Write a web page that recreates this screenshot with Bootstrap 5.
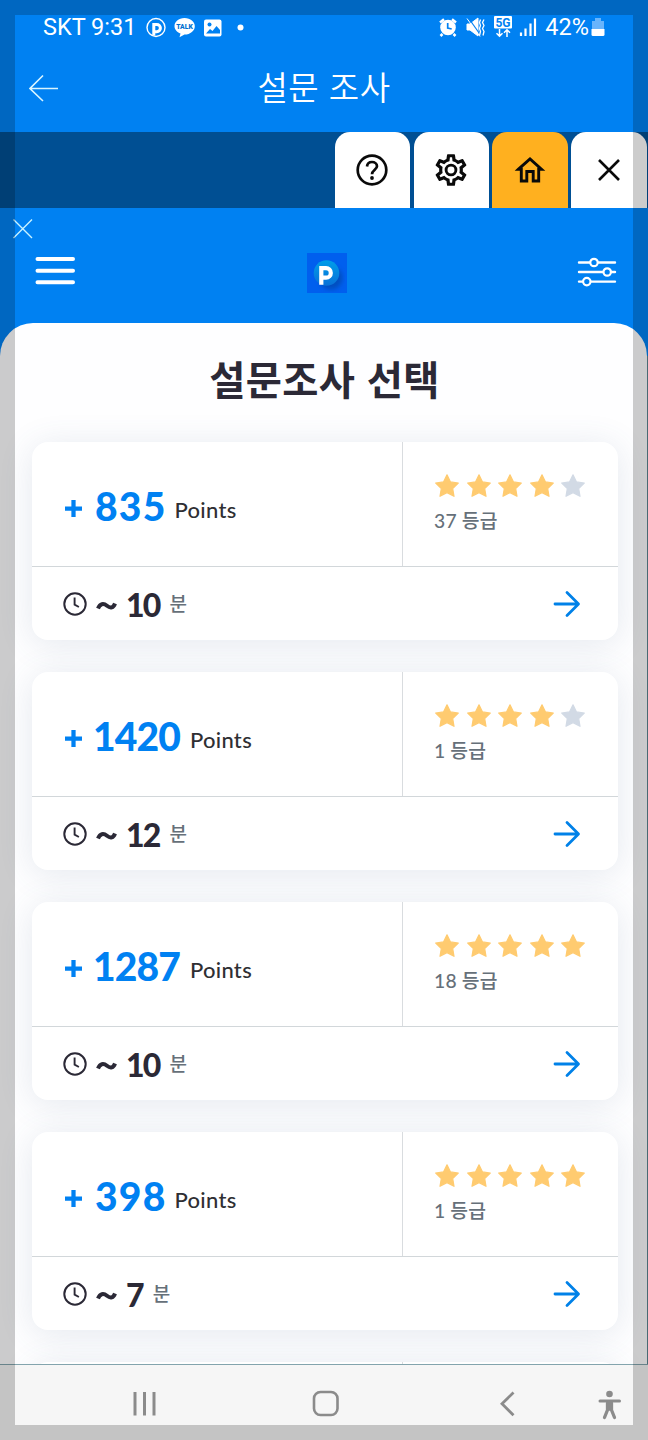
<!DOCTYPE html>
<html lang="ko">
<head>
<meta charset="utf-8">
<meta name="viewport" content="width=device-width, initial-scale=1">
<title>설문 조사</title>
<link href="https://cdn.jsdelivr.net/npm/bootstrap@5.3.0/dist/css/bootstrap.min.css" rel="stylesheet">
<style>
:root{--brand:#0081f2;--ink:#2b2936;--muted-ink:#667079}
body{font-family:Lato,"Noto Sans CJK KR",sans-serif;background:#fff;color:var(--ink)}
svg{display:block;flex:none}
.phone{width:648px;height:1440px;background:var(--brand)}
.phone::after{content:"";position:absolute;inset:0;border:15px solid rgba(0,0,0,.2);pointer-events:none}
.status{height:54px;font:400 23.5px/54px Roboto,"Noto Sans",sans-serif;padding:0 43px 0 43px}
.signals{margin-right:5px}
.battery{margin-left:2px}
.titlebar{height:78px;padding:0 29px 11px}
.titlebar h1{font:350 33px/1 "Noto Sans CJK KR",sans-serif;letter-spacing:.5px;margin:0;padding-bottom:2px}
.side{width:30px}
.tabs{height:76px;background:#004f93;gap:3.3px;padding-right:1.4px}
.tabitem{width:75.5px;height:76px;background:#fff;border-radius:15px 15px 0 0;color:#0a0a0a}
.tabitem.active{background:#ffb01f}
.apphead{height:115px;padding:45px 31px 0 35px}
.dismiss{left:13px;top:11px}
.sheet{height:1041px;background:#fefeff;border-radius:33px 33px 0 0;padding:0 30px 0 32px;margin-right:1px}
.edge{background:linear-gradient(90deg,transparent 647px,#5c8590 647px) no-repeat 0 33px}
.sheet h2{font:700 39.300px/46px "Noto Sans CJK KR",sans-serif;height:119px;padding-top:32px;margin:0;letter-spacing:.4px;flex:none}
.survey{width:586px;height:198px;border:0;border-radius:16px;margin-bottom:32px;box-shadow:0 4px 34px rgba(70,100,135,.14)}
.upper{height:125px;border-bottom:1px solid #d2d7da}
.reward{width:371px;padding:3px 0 0 31px;border-right:1px solid #d9dcdf;color:var(--brand)}
.plus{width:32px;padding:5px 0 0 2px}
.amount{font-size:39px;line-height:50px;font-weight:900;letter-spacing:1.2px;margin-right:8px}
.amount.four{letter-spacing:-.9px;margin:0 10px 0 -2px}
.long{letter-spacing:-.9px}
.unit{font-size:22px;font-weight:500;color:#2f2f33;letter-spacing:.3px;line-height:30px;padding-top:8px;align-self:center}
.rating{padding:31px 0 0 31px}
.stars{gap:5.5px}
.votes{font-size:19.3px;line-height:24px;font-weight:500;color:var(--muted-ink);margin-top:10px;letter-spacing:.3px;word-spacing:-.5px}
.lower{height:73px;padding:0 37px 0 31px}
.minutes{font-size:32px;line-height:40px;font-weight:900;margin-left:9px;padding-top:3px;letter-spacing:-1.8px}
.minutes .tilde{width:30px;margin-top:2px}
.minutes small{font:500 19px/26px "Noto Sans CJK KR",sans-serif;color:var(--muted-ink);margin:-4px 0 0 10px;letter-spacing:0}
.sysnav{height:76px;background:#f6f6f6;border-top:1px solid #83a4ad}
.sysnav svg{width:100%;height:75px}
</style>
</head>
<body>
<svg width="0" height="0" class="position-absolute">
<defs>
<symbol id="star" viewBox="0 0 26 26"><path d="M13 1.800l3.500 7.100 7.800 1.100-5.600 5.500 1.300 7.800-7-3.700-7 3.700 1.300-7.800L1.700 10l7.800-1.100z" fill="currentColor" stroke="currentColor" stroke-width="1.200" stroke-linejoin="round"/></symbol>
<symbol id="clock" viewBox="0 0 24 24"><circle cx="12" cy="12" r="10.700" fill="none" stroke="#2b2936" stroke-width="2"/><path d="M11.600 5.500v7.200l4.300 2.300" fill="none" stroke="#2b2936" stroke-width="1.900"/></symbol>
<symbol id="go" viewBox="0 0 28 28"><path d="M2 14h23M14 2.500L25.500 14 14 25.500" fill="none" stroke="#0081e8" stroke-width="2.800" stroke-linecap="round" stroke-linejoin="round"/></symbol>
<symbol id="plus" viewBox="0 0 18 18"><path d="M0 9h18M9 0v18" stroke="#0081f2" stroke-width="4.500"/></symbol>
</defs>
</svg>
<main class="phone position-relative overflow-hidden d-flex flex-column">
  <div class="status d-flex align-items-center justify-content-between text-white">
    <div class="d-flex align-items-center">
      <span>SKT 9:31</span>
      <svg class="ms-2" width="104" height="26" viewBox="0 0 104 26">
        <circle cx="12" cy="13.500" r="9" fill="none" stroke="#fff" stroke-width="1.400"/><path d="M9.800 21.500V10.500h3a3.600 3.600 0 0 1 0 7.200h-3" fill="none" stroke="#fff" stroke-width="3"/>
        <path d="M40.500 4c6 0 10.300 3.700 10.300 8.200S46.500 20.500 40.500 20.500l-5 2.700 1-3.700c-3.600-1.500-6-4.200-6-7.300C30.500 7.700 34.500 4 40.500 4z" fill="#fff"/><text x="40.500" y="15" text-anchor="middle" font-family="Roboto" font-weight="900" font-size="6.800" fill="#0070d0">TALK</text>
        <rect x="60" y="5.500" width="17.500" height="17" rx="2" fill="#fff"/><circle cx="65.500" cy="10.500" r="2" fill="#0081f2"/><path d="M62 19.500l4-4.500 2.500 2 4-5 3.500 4v3.500z" fill="#0081f2"/>
        <circle cx="96.500" cy="13.500" r="3" fill="#fff"/>
      </svg>
    </div>
    <div class="d-flex align-items-center">
      <svg class="signals" width="106" height="28" viewBox="0 0 106 28">
        <circle cx="14" cy="14.500" r="7.800" fill="#fff"/><path d="M6 9.500l4-3.200M22 9.500l-4-3.200M8.500 21l-2 2M19.500 21l2 2" stroke="#fff" stroke-width="2.500"/><path d="M13.700 10v5l4 1" fill="none" stroke="#0081f2" stroke-width="1.700"/>
        <path d="M33 11h3l8-6v18l-8-6h-3zM33 5.500l13 18" fill="#fff" stroke="#fff" stroke-width="1"/><path d="M34.500 5l12 17" stroke="#0081f2" stroke-width="1.200"/><path d="M46.500 6.500l-1 3 1 3-1 3 1 3-1 4M50 6.500l-1.500 3 1.500 3-1.500 3 1.500 3-1 4" fill="none" stroke="#fff" stroke-width="1.300"/>
        <rect x="60" y="3" width="18" height="12.500" rx="1" fill="#fff"/><text x="69" y="13.500" text-anchor="middle" font-family="Roboto" font-size="12" font-weight="700" fill="#0081f2">5G</text><path d="M65.500 16v7m-3-2.700l3 3 3-3M73 24v-7m-3 2.700l3-3 3 3" fill="none" stroke="#fff" stroke-width="1.500"/>
        <path d="M87 19.500V23M91.500 15.500V23M96.500 10.500V23M101 5.500V23" stroke="#fff" stroke-width="2.200"/>
      </svg>
      <span>42%</span>
      <svg class="battery" width="14" height="20" viewBox="0 0 14 20"><path d="M4 1h6v3h3v9H1V4h3z" fill="#69b4fb"/><path d="M.500 12h13v5.500q0 1.500-1.500 1.500H2q-1.500 0-1.500-1.500z" fill="#fff"/></svg>
    </div>
  </div>
  <header class="titlebar d-flex align-items-center justify-content-between text-white">
    <svg class="side" width="30" height="30" viewBox="0 0 30 30"><path d="M29 15.500H1.500M14 2.500L1 15.500l13 12.500" fill="none" stroke="#d9f5ff" stroke-width="1.600"/></svg>
    <h1>설문 조사</h1>
    <span class="side"></span>
  </header>
  <nav class="tabs d-flex justify-content-end">
    <div class="tabitem d-flex align-items-center justify-content-center"><svg width="34" height="34" viewBox="0 0 34 34"><circle cx="17" cy="17" r="14.300" fill="none" stroke="currentColor" stroke-width="2.700"/><path d="M12 13.500c.3-3 2.300-4.500 5-4.500s5 1.700 5 4.300c0 3.200-5 3.800-5 8" fill="none" stroke="currentColor" stroke-width="2.700"/><circle cx="17" cy="25" r="1.900" fill="currentColor"/></svg></div>
    <div class="tabitem d-flex align-items-center justify-content-center"><svg width="38" height="38" viewBox="0 0 24 24" fill="currentColor"><path d="M19.430 12.980c.04-.32.070-.64.070-.98s-.03-.66-.07-.98l2.110-1.650c.19-.15.240-.42.120-.64l-2-3.460a.5.500 0 0 0-.61-.22l-2.490 1a7.300 7.300 0 0 0-1.690-.98l-.38-2.650A.49.490 0 0 0 14 2h-4a.49.490 0 0 0-.49.420l-.38 2.650c-.61.250-1.170.59-1.690.98l-2.490-1a.5.500 0 0 0-.61.220l-2 3.460a.49.490 0 0 0 .12.640l2.110 1.650a7.930 7.930 0 0 0 0 1.960l-2.110 1.650a.49.490 0 0 0-.12.640l2 3.460c.12.220.39.300.61.220l2.490-1c.52.400 1.080.73 1.690.98l.38 2.650c.03.240.24.420.49.420h4c.25 0 .46-.18.490-.42l.38-2.650c.61-.25 1.170-.59 1.690-.98l2.490 1c.23.090.49 0 .61-.22l2-3.460a.49.490 0 0 0-.12-.64zm-1.980-1.710c.07.520.07.940 0 1.460l-.14 1.130 1.970 1.550-.7 1.210-2.320-.94-.87.700c-.4.320-.85.580-1.360.79l-1.060.43-.29 2.400h-1.360l-.29-2.400-1.060-.43a5.700 5.700 0 0 1-1.360-.79l-.87-.7-2.320.94-.7-1.210 1.970-1.550-.14-1.130a5.400 5.400 0 0 1 0-1.460l.14-1.130-1.970-1.550.7-1.210 2.320.94.870-.7c.4-.32.850-.58 1.360-.79l1.060-.43.290-2.400h1.360l.29 2.400 1.060.43c.51.210.96.470 1.360.79l.87.700 2.320-.94.700 1.210-1.970 1.550zM12 8a4 4 0 1 0 0 8 4 4 0 0 0 0-8zm0 6.200a2.200 2.200 0 1 1 0-4.400 2.200 2.200 0 0 1 0 4.400z"/></svg></div>
    <div class="tabitem active d-flex align-items-center justify-content-center"><svg width="32" height="30" viewBox="0 0 32 30"><path d="M4.500 14.200L16 4l11.500 10.200h-2.800V26h-5.500v-9.500h-6.400V26H7.300V14.200z" fill="none" stroke="currentColor" stroke-width="2.900"/></svg></div>
    <div class="tabitem d-flex align-items-center justify-content-center"><svg width="24" height="24" viewBox="0 0 24 24"><path d="M2 2l20 20M22 2L2 22" stroke="currentColor" stroke-width="2.600"/></svg></div>
  </nav>
  <section class="apphead position-relative d-flex justify-content-between">
    <svg class="dismiss position-absolute" width="20" height="20" viewBox="0 0 20 20"><path d="M.500.500l18.500 18.500M19 .500L.500 19" stroke="#c9f3ff" stroke-width="1.400"/></svg>
    <svg width="40" height="36" viewBox="0 0 40 36"><path d="M2.500 6h35.500M2.500 17.800h35.500M2.500 29.300h35.500" stroke="#fff" stroke-width="4" stroke-linecap="round"/></svg>
    <svg width="41" height="40" viewBox="0 0 41 40">
      <defs><linearGradient id="disc" x2="0" y2="1"><stop stop-color="#009de9"/><stop offset="1" stop-color="#0871d8"/></linearGradient><filter id="soft"><feGaussianBlur stdDeviation="2"/></filter></defs>
      <rect x="1" width="40" height="40" fill="#005fee"/><circle cx="25" cy="25" r="11.500" fill="#0646a8" opacity=".65" filter="url(#soft)"/><circle cx="20.500" cy="20" r="12.800" fill="url(#disc)"/>
      <path d="M15.300 31.700V15.200h4.800a4.700 4.700 0 0 1 0 9.400h-4.800" fill="none" stroke="#fff" stroke-width="4.200"/>
    </svg>
    <svg width="40" height="40" viewBox="0 0 40 40"><path d="M2 9.500h36M2 19h36M2 28.600h36" stroke="#fff" stroke-width="2.400" stroke-linecap="round"/><g fill="#0081f2" stroke="#fff" stroke-width="2.200"><circle cx="17" cy="9.500" r="3.700"/><circle cx="30.200" cy="19" r="3.700"/><circle cx="9.800" cy="28.600" r="3.700"/></g></svg>
  </section>
  <div class="edge">
  <section class="sheet overflow-hidden d-flex flex-column">
    <h2 class="text-center">설문조사 선택</h2>
    <div id="surveys"></div>
  </section>
  </div>
  <footer class="sysnav">
    <svg viewBox="0 0 648 75" fill="none" stroke="#8b8b8b" stroke-width="3"><path d="M135 27v23.500M144.500 27v23.500M154 27v23.500"/><rect x="314" y="27" width="23.500" height="23" rx="6.500" stroke-width="2.600"/><path d="M513.500 27.500L502 38.800l11.500 11.500" stroke-width="2.800"/><g stroke-linecap="round"><circle cx="609.500" cy="29" r="3.300" fill="#8b8b8b" stroke="none"/><path d="M600 36h19.500" stroke-width="3"/><path d="M609.500 37v7M607.500 38v7l-3 7.500M611.500 38v7l3 7.500" stroke-width="3.300"/></g></svg>
  </footer>
</main>
<script>
const surveys=[[835,4,37,10],[1420,4,1,12],[1287,5,18,10],[398,5,1,7]];
document.getElementById('surveys').innerHTML=surveys.map(([points,stars,votes,min])=>`
<article class="card survey">
  <div class="upper d-flex">
    <div class="reward d-flex align-items-center"><span class="plus"><svg width="17" height="17"><use href="#plus"/></svg></span><b class="amount ${points>999?'four':''}">${points}</b><span class="unit">Points</span></div>
    <div class="rating"><div class="stars d-flex">${[1,2,3,4,5].map(n=>`<svg width="26" height="26" color="${n<=stars?'#ffcb70':'#d2dae5'}"><use href="#star"/></svg>`).join('')}</div><div class="votes">${votes} 등급</div></div>
  </div>
  <div class="lower d-flex align-items-center"><svg width="24" height="24"><use href="#clock"/></svg><span class="minutes d-flex align-items-center"><svg class="tilde" width="30" height="20" viewBox="0 0 30 20"><path d="M2 12.500C4 7.500 7.500 7 11 9.800s6.500 2 8-2.300" fill="none" stroke="#2b2936" stroke-width="4"/></svg>${min}<small>분</small></span><svg class="ms-auto" width="28" height="28"><use href="#go"/></svg></div>
</article>`).join('')+'<article class="card survey"><div class="upper d-flex"><div class="reward"></div></div></article>';
</script>
<script src="https://cdn.jsdelivr.net/npm/bootstrap@5.3.0/dist/js/bootstrap.bundle.min.js"></script>
</body>
</html>
